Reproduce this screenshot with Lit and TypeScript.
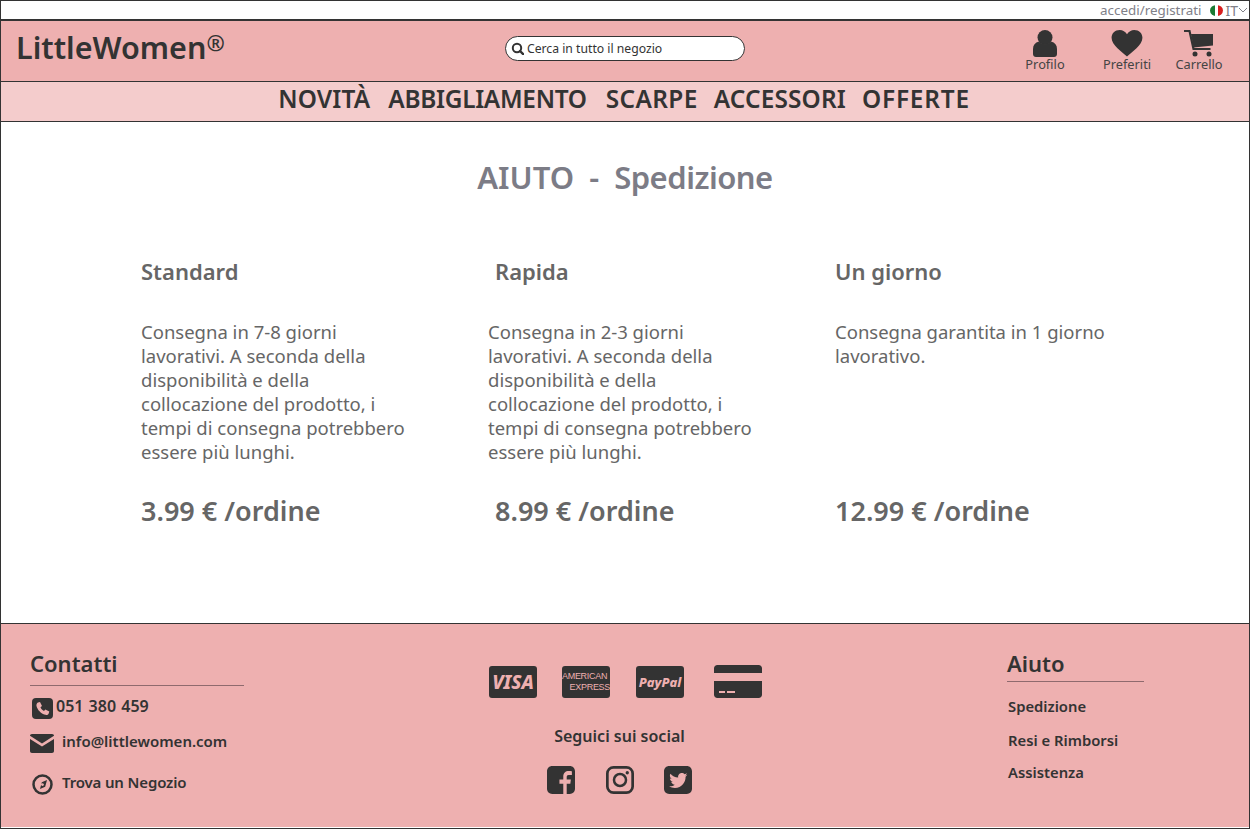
import { LitElement, html, css, svg } from 'lit';
import { customElement } from 'lit/decorators.js';

const ICONS = {
  search: svg`<circle cx="6" cy="6" r="4.2" fill="none" stroke="currentColor" stroke-width="2"/><path d="M9 9l3.2 3.2" stroke="currentColor" stroke-width="2.4" stroke-linecap="round"/>`,
  user: svg`<circle cx="12" cy="7.500" r="7.500"/><path d="M0 24v-5c0-4 2-6.500 6-7.500 1.500 1.800 3.500 2.800 6 2.800s4.500-1 6-2.800c4 1 6 3.500 6 7.500v5c0 1.700-1.300 3-3 3H3c-1.700 0-3-1.300-3-3z"/>`,
  heart: svg`<path d="M16 27.500C11 22.500 0 16 0 8 0 3.500 3.500 0 8.500 0 11.500 0 14.500 1.800 16 4.500 17.500 1.800 20.500 0 23.500 0 28.500 0 32 3.500 32 8 32 16 21 22.500 16 27.500z"/>`,
  cart: svg`<path d="M0 1h5.500l4 18h17" fill="none" stroke="currentColor" stroke-width="2.200"/><path d="M7 4h22v11.500l-19.500 2z"/><circle cx="11" cy="24" r="2.500"/><circle cx="25" cy="24" r="2.500"/>`,
  phone: svg`<rect width="21" height="21" rx="4"/><path d="M6 4.500l2-.6 2 4-1.500 1.300c.6 1.600 2 3 3.500 3.700l1.300-1.500 4 2-.6 2c-.6 1.300-2 1.800-3.500 1.400C8.700 15.400 5.500 12 4.500 8c-.3-1.500.3-2.900 1.500-3.500z" fill="#eeb0b0"/>`,
  mail: svg`<path d="M2 0h20c1.200 0 2 .8 2 1.800L12 9.500 0 1.800C0 .8.800 0 2 0z"/><path d="M0 5l12 7.500L24 5v12c0 1.200-.8 2-2 2H2c-1.200 0-2-.8-2-2z"/>`,
  compass: svg`<circle cx="10.500" cy="10.500" r="9" fill="none" stroke="currentColor" stroke-width="2.500"/><path d="M15 6l-1.800 6.800-5.200 2.200 1.800-6.800zM10.500 9.200a1.400 1.400 0 1 0 .01 0z" fill-rule="evenodd"/>`,
  facebook: svg`<path fill-rule="evenodd" d="M5 0h17c2.800 0 5 2.200 5 5v17c0 2.800-2.200 5-5 5h-3V17h3.500l.5-4h-4v-2.500c0-1.200.5-1.900 1.900-1.900H24V5c-.5-.1-1.800-.2-3-.2-3.200 0-5.300 1.900-5.300 5.300V13H12v4h3.700v10H5c-2.800 0-5-2.200-5-5V5c0-2.800 2.200-5 5-5z"/>`,
  instagram: svg`<rect x="1.300" y="1.300" width="24.400" height="24.400" rx="6" fill="none" stroke="currentColor" stroke-width="2.600"/><circle cx="13.500" cy="13.500" r="5.800" fill="none" stroke="currentColor" stroke-width="2.400"/><circle cx="20.500" cy="6.500" r="1.600"/>`,
  twitter: svg`<path fill-rule="evenodd" d="M5 0h17c2.800 0 5 2.200 5 5v17c0 2.800-2.200 5-5 5H5c-2.800 0-5-2.200-5-5V5c0-2.800 2.200-5 5-5zm17.500 8.500c-.7.300-1.300.5-2 .6.700-.5 1.300-1.100 1.600-2-.7.400-1.400.7-2.200.8-.7-.7-1.600-1.200-2.700-1.200-2.400 0-4.100 2.200-3.500 4.500-3-.2-5.700-1.600-7.500-3.800-1 1.600-.5 3.800 1.100 4.900-.6 0-1.100-.2-1.600-.5 0 1.700 1.200 3.200 2.900 3.600-.5.100-1 .2-1.600.1.400 1.400 1.800 2.500 3.400 2.500-1.500 1.200-3.500 1.700-5.400 1.500 1.600 1 3.500 1.600 5.500 1.600 6.700 0 10.500-5.700 10.300-10.800.7-.5 1.300-1.100 1.700-1.800z"/>`,
};

@customElement('app-root')
export class AppRoot extends LitElement {
  static styles = css`
    :host {
      display: block;
      width: 1250px;
      height: 829px;
      box-sizing: border-box;
      border: 1px solid #333;
      background: #fff;
      color: #333;
      font-family: 'Noto Sans', 'Open Sans', sans-serif;
      overflow: hidden;
    }
    svg { fill: currentColor; display: block; }

    .topbar {
      height: 18px;
      display: flex;
      justify-content: flex-end;
      align-items: center;
      color: #808088;
      font-size: 13.4px;
      border-bottom: 2px solid #333;
    }
    .topbar .login { margin-right: 9px; }
    .topbar .lang { font-size: 14px; }
    .flag {
      width: 13px;
      height: 11px;
      border-radius: 50%;
      margin-right: 2px;
      background: linear-gradient(90deg, #1a7a32 0 36%, #fff 36% 64%, #d81e1e 64%);
    }
    .chevron { color: #808088; margin-right: 1px; }

    .header {
      height: 61px;
      box-sizing: border-box;
      padding-bottom: 5px;
      display: grid;
      grid-template-columns: 504px 240px 1fr;
      align-items: center;
      background: #eeb0b0;
      border-bottom: 1px solid #333;
    }
    .logo { font-size: 30.5px; font-weight: 600; padding-left: 15px; margin-bottom: 3px; }
    .logo span { font-size: 22px; vertical-align: 8px; line-height: 0; }
    .search {
      height: 25px;
      box-sizing: border-box;
      border: 1px solid #333;
      border-radius: 13px;
      background: #fff;
      display: flex;
      align-items: center;
      gap: 3px;
      padding-left: 5px;
      font-size: 12.2px;
    }
    .actions { display: flex; justify-content: flex-end; padding-right: 26px; margin-top: 5px; }
    .action {
      display: flex;
      flex-direction: column;
      align-items: center;
      font-size: 12.8px;
      line-height: 15px;
      width: 48px;
      color: #444;
      margin-left: 24px;
    }
    .action:nth-child(2) { margin-left: 34px; }
    .action svg { color: #333; }

    .nav {
      height: 40px;
      box-sizing: border-box;
      padding: 0 2px 6px 0;
      display: flex;
      justify-content: center;
      align-items: center;
      background: #f4cccc;
      border-bottom: 1px solid #333;
      font-size: 24.4px;
      font-weight: 600;
      letter-spacing: 0.15px;
    }
    .nav span:nth-child(2) { margin-left: 18px; letter-spacing: -0.3px; }
    .nav span:nth-child(3) { margin-left: 19px; letter-spacing: 0.4px; }
    .nav span:nth-child(4) { margin-left: 16px; }
    .nav span:nth-child(5) { margin-left: 16px; letter-spacing: 0.8px; }

    .main { height: 501px; box-sizing: border-box; padding-top: 34px; }
    .title {
      margin: 0;
      text-align: center;
      font-size: 31px;
      font-weight: 600;
      color: #7c7c86;
      word-spacing: 7px;
    }
    .title span { letter-spacing: -0.5px; }
    .plans {
      display: grid;
      grid-template-columns: repeat(3, 347px);
      padding: 58px 0 0 140px;
      color: #666;
    }
    .plan h2 { margin: 0; font-size: 22px; line-height: 30px; font-weight: 600; }
    .plan p { margin: 34px 0 0; height: 144px; width: 270px; font-size: 18.5px; line-height: 24px; }
    .plan .price { margin-top: 29px; font-size: 27px; line-height: 36px; font-weight: 600; }
    .shift { padding-left: 7px; }

    .footer {
      height: 204px;
      box-sizing: border-box;
      background: #eeb0b0;
      border-top: 1px solid #333;
      display: grid;
      grid-template-columns: 214px 1fr 137px;
      padding: 24px 105px 0 29px;
    }
    .col-title {
      font-size: 22px;
      line-height: 30px;
      font-weight: 600;
      padding-bottom: 7px;
      border-bottom: 1px solid #8f6a6e;
    }
    .aiuto { padding-bottom: 3px; }
    .contact {
      display: flex;
      align-items: center;
      font-size: 15px;
      font-weight: 600;
    }
    .contact span { line-height: 15px; margin-bottom: 4px; }
    .phone { margin-top: 12px; gap: 3px; padding-left: 2px; }
    .phone span { font-size: 16px; word-spacing: 1px; }
    .mail { margin-top: 15px; gap: 8px; }
    .store { margin-top: 21px; gap: 9px; padding-left: 2px; }
    .store span { letter-spacing: -0.15px; }

    .center { display: flex; flex-direction: column; align-items: center; padding-right: 12px; }
    .cards { display: flex; gap: 25px; margin: 18px 0 0 12px; }
    .card {
      width: 48px;
      height: 32px;
      border-radius: 3px;
      background: #333;
      color: #eeb0b0;
      display: flex;
      align-items: center;
      justify-content: center;
      font-weight: 800;
      font-style: italic;
    }
    .visa { font-size: 19px; }
    .paypal { font-size: 13px; margin-left: 1px; }
    .amex {
      flex-direction: column;
      font-family: 'Liberation Sans', sans-serif;
      font-style: normal;
      font-weight: 400;
      font-size: 9px;
      line-height: 11px;
      letter-spacing: -0.3px;
      overflow: hidden;
    }
    .amex span { white-space: nowrap; }
    .amex span:first-child { align-self: flex-start; }
    .amex span:last-child { align-self: flex-end; }
    .generic { background: none; display: block; margin-left: 5px; height: 33px; margin-top: -1px; }
    .follow { margin-top: 27px; font-size: 16px; font-weight: 600; line-height: 22px; }
    .social { display: flex; gap: 30.5px; margin-top: 19px; }

    .help-link { font-size: 14.8px; font-weight: 600; padding-left: 1px; line-height: 20px; }
    .help-link.first { margin-top: 14px; }
    .help-link.next { margin-top: 14px; }
    .help-link.last { margin-top: 12px; }
  `;

  icon(name: keyof typeof ICONS, w: number, h: number, vw = w, vh = h) {
    return html`<svg width=${w} height=${h} viewBox="0 0 ${vw} ${vh}">${ICONS[name]}</svg>`;
  }

  plan(name: string, text: string, price: string, shift = false) {
    return html`<div class="plan">
      <h2 class=${shift ? 'shift' : ''}>${name}</h2>
      <p>${text}</p>
      <div class="price ${shift ? 'shift' : ''}">${price}</div>
    </div>`;
  }

  render() {
    const long = 'Consegna in {n} giorni lavorativi. A seconda della disponibilità e della collocazione del prodotto, i tempi di consegna potrebbero essere più lunghi.';
    return html`
      <div class="topbar">
        <span class="login">accedi/registrati</span>
        <div class="flag"></div>
        <span class="lang">IT</span>
        <svg class="chevron" width="10" height="6" viewBox="0 0 10 6"><path d="M1 1l4 4 4-4" fill="none" stroke="currentColor"/></svg>
      </div>
      <div class="header">
        <div class="logo">LittleWomen<span>®</span></div>
        <div class="search">${this.icon('search', 13, 13)}<span>Cerca in tutto il negozio</span></div>
        <div class="actions">
          <div class="action">${this.icon('user', 24, 27)}Profilo</div>
          <div class="action">${this.icon('heart', 32, 27, 32, 28)}Preferiti</div>
          <div class="action">${this.icon('cart', 30, 27)}Carrello</div>
        </div>
      </div>
      <nav class="nav">
        <span>NOVITÀ</span><span>ABBIGLIAMENTO</span><span>SCARPE</span><span>ACCESSORI</span><span>OFFERTE</span>
      </nav>
      <main class="main">
        <h1 class="title">AIUTO - <span>Spedizione</span></h1>
        <div class="plans">
          ${this.plan('Standard', long.replace('{n}', '7-8'), '3.99 € /ordine')}
          ${this.plan('Rapida', long.replace('{n}', '2-3'), '8.99 € /ordine', true)}
          ${this.plan('Un giorno', 'Consegna garantita in 1 giorno lavorativo.', '12.99 € /ordine')}
        </div>
      </main>
      <footer class="footer">
        <div>
          <div class="col-title">Contatti</div>
          <div class="contact phone">${this.icon('phone', 21, 21)}<span>051 380 459</span></div>
          <div class="contact mail">${this.icon('mail', 24, 19)}<span>info@littlewomen.com</span></div>
          <div class="contact store">${this.icon('compass', 21, 21)}<span>Trova un Negozio</span></div>
        </div>
        <div class="center">
          <div class="cards">
            <div class="card visa">VISA</div>
            <div class="card amex"><span>AMERICAN</span><span>EXPRESS</span></div>
            <div class="card paypal">PayPal</div>
            <svg class="card generic" width="48" height="33" viewBox="0 0 48 33"><path d="M3 0h42c1.700 0 3 1.300 3 3v5H0V3c0-1.700 1.300-3 3-3zM0 16h48v14c0 1.700-1.300 3-3 3H3c-1.700 0-3-1.300-3-3z" fill="#333"/><path d="M5 26h6v2H5zM13 26h8v2h-8z" fill="#eeb0b0"/></svg>
          </div>
          <div class="follow">Seguici sui social</div>
          <div class="social">
            ${this.icon('facebook', 28, 28, 27, 27)}
            ${this.icon('instagram', 28, 28, 27, 27)}
            ${this.icon('twitter', 28, 28, 27, 27)}
          </div>
        </div>
        <div>
          <div class="col-title aiuto">Aiuto</div>
          <div class="help-link first">Spedizione</div>
          <div class="help-link next">Resi e Rimborsi</div>
          <div class="help-link last">Assistenza</div>
        </div>
      </footer>
    `;
  }
}
